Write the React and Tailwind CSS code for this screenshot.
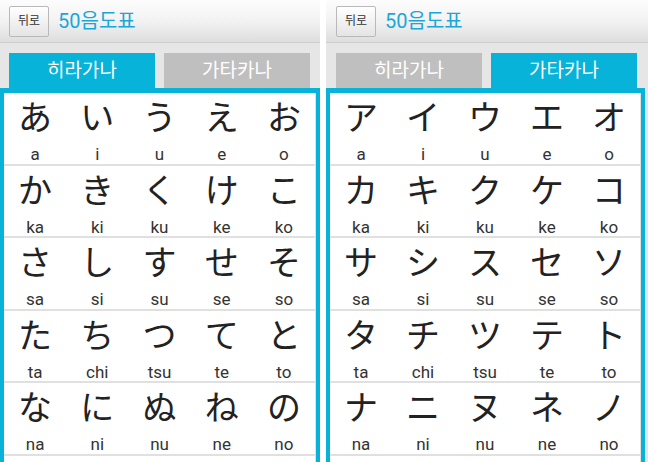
import React from "react";

const HIRA = [
  ["あ", "い", "う", "え", "お"],
  ["か", "き", "く", "け", "こ"],
  ["さ", "し", "す", "せ", "そ"],
  ["た", "ち", "つ", "て", "と"],
  ["な", "に", "ぬ", "ね", "の"],
];
const KATA = [
  ["ア", "イ", "ウ", "エ", "オ"],
  ["カ", "キ", "ク", "ケ", "コ"],
  ["サ", "シ", "ス", "セ", "ソ"],
  ["タ", "チ", "ツ", "テ", "ト"],
  ["ナ", "ニ", "ヌ", "ネ", "ノ"],
];
const ROMA = [
  ["a", "i", "u", "e", "o"],
  ["ka", "ki", "ku", "ke", "ko"],
  ["sa", "si", "su", "se", "so"],
  ["ta", "chi", "tsu", "te", "to"],
  ["na", "ni", "nu", "ne", "no"],
];

const KR = { fontFamily: '"Roboto", "Noto Sans CJK KR", sans-serif' };
const JP = { fontFamily: '"Noto Sans CJK JP", sans-serif' };

function Screen({ kana, active, pad, panelW }) {
  const pl = pad === 10 ? "pl-[10px]" : "pl-[9px]";
  return (
    <div className="flex h-full w-full flex-col bg-[#e6e6e6]">
      <div
        className={`flex h-[43px] shrink-0 items-center border-b border-[#cdcdcd] bg-gradient-to-b from-[#fdfdfd] via-[#f2f2f2] to-[#dedede] ${pl}`}
      >
        <div
          className="flex h-[31px] w-[40px] items-center justify-center rounded-[2px] border border-[#b9b9b9] bg-gradient-to-b from-[#ffffff] to-[#e4e4e4] text-[12px] text-[#333]"
          style={KR}
        >
          뒤로
        </div>
        <div className="ml-[9px] text-[20px] leading-none text-[#1aa7d8]" style={KR}>
          50음도표
        </div>
      </div>
      <div className={`mt-[10px] flex h-[35px] shrink-0 gap-[9px] ${pl}`}>
        <div
          className={`flex w-[146px] items-center justify-center pt-[1px] text-[19px] text-white ${active === 0 ? "bg-[#07b3d8]" : "bg-[#bfbfbf]"}`}
          style={KR}
        >
          히라가나
        </div>
        <div
          className={`flex w-[146px] items-center justify-center pt-[1px] text-[19px] text-white ${active === 1 ? "bg-[#07b3d8]" : "bg-[#bfbfbf]"}`}
          style={KR}
        >
          가타카나
        </div>
      </div>
      <div
        className="flex-1 overflow-hidden border-x-4 border-t-[5px] border-[#07b3d8] bg-white"
        style={{ width: panelW }}
      >
        <div className="h-full border-r border-[#e2e2e2]">
          {kana.map((row, r) => (
            <div key={r} className="flex h-[72.5px] border-b-2 border-[#e0e0e0]">
              {row.map((k, c) => (
                <div key={c} className="flex flex-1 flex-col items-center">
                  <div className="mt-[3px] text-[34px] leading-[40px] text-[#222]" style={JP}>
                    {k}
                  </div>
                  <div
                    className="mt-[10px] text-[17px] leading-[17px] text-[#333]"
                    style={{ fontFamily: '"Roboto", sans-serif' }}
                  >
                    {ROMA[r][c]}
                  </div>
                </div>
              ))}
            </div>
          ))}
        </div>
      </div>
    </div>
  );
}

export default function App() {
  return (
    <div className="flex h-[462px] w-[648px] overflow-hidden bg-white">
      <div className="h-full w-[320px] shrink-0">
        <Screen kana={HIRA} active={0} pad={9} panelW={320} />
      </div>
      <div className="w-[6px] shrink-0 bg-white" />
      <div className="h-full w-[322px] shrink-0">
        <Screen kana={KATA} active={1} pad={10} panelW={319} />
      </div>
    </div>
  );
}
